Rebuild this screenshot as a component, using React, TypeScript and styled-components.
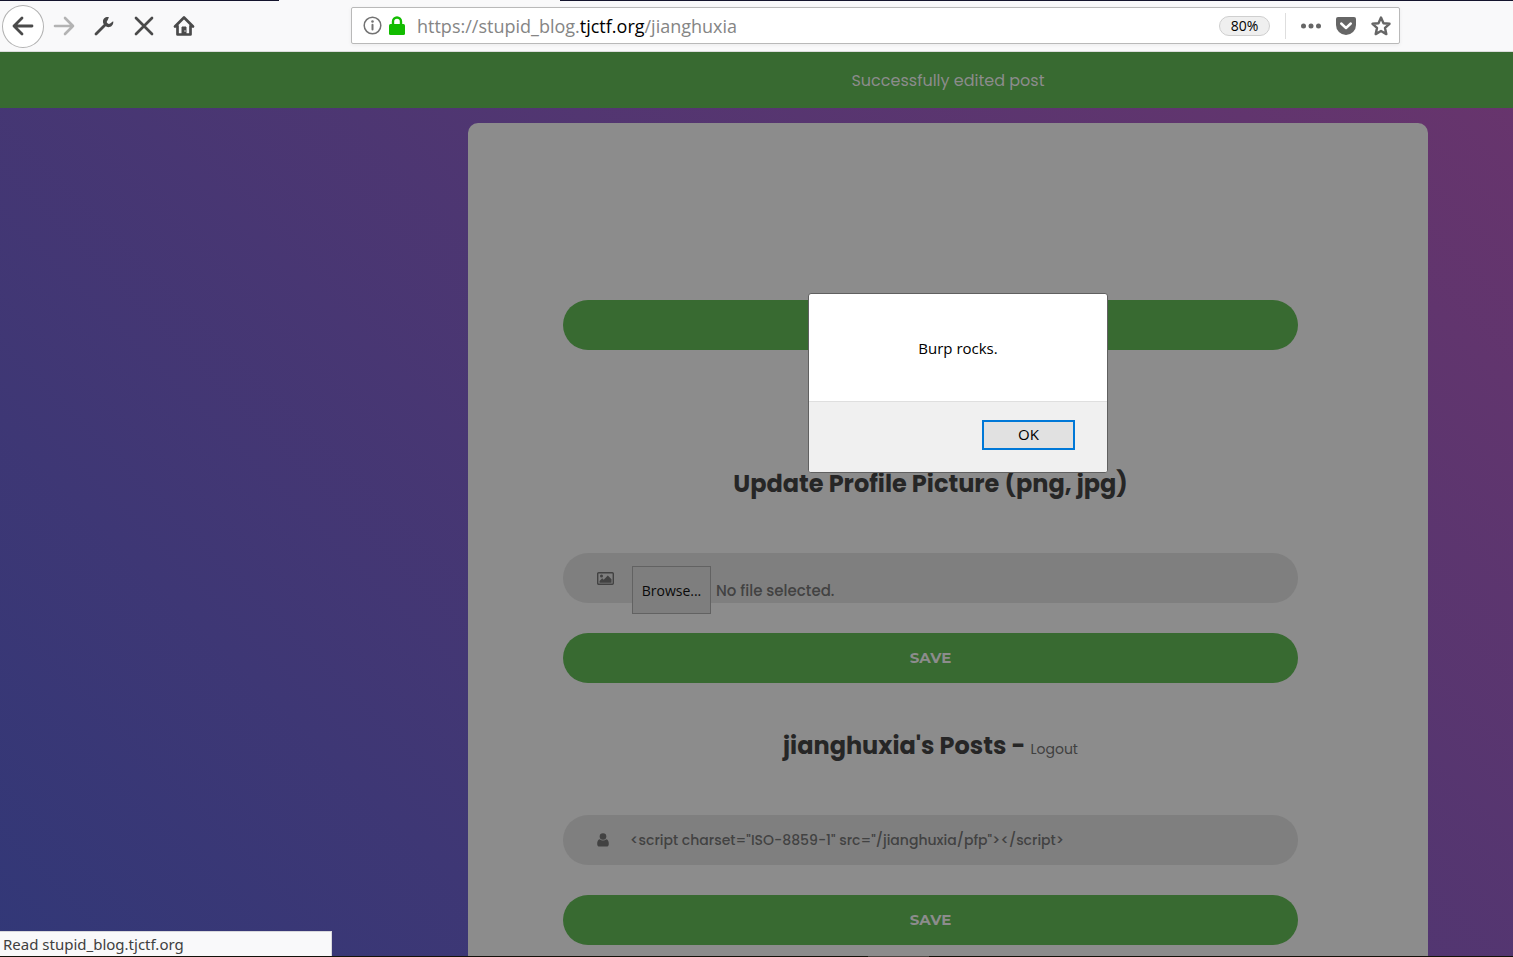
import React from "react";
import styled, { createGlobalStyle } from "styled-components";

const UI = `"Segoe UI", "Open Sans", "Noto Sans", sans-serif`;
const SITE = `Poppins, Inter, "Open Sans", sans-serif`;
const green = "#386a31";
const grey = "#8c8c8c";

const Global = createGlobalStyle`
  * { box-sizing: border-box; }
  body { margin: 0; overflow: hidden; background: #f9f9fa; }
  button, input { font: inherit; }
`;

const Browser = styled.div`
  display: flex;
  flex-direction: column;
  height: 100vh;
  overflow: hidden;
  font-family: ${UI};
`;

const TabEdge = styled.div`
  display: flex;
  justify-content: space-between;
  height: 1px;
  flex: none;
`;
const Edge = styled.div<{ $w: string }>`
  width: ${(p) => p.$w};
  background: #14142d;
`;
const BottomEdge = styled.div`
  height: 1px;
  flex: none;
  padding-left: 868px;
  background: #14120a;
`;
const BottomMark = styled.div`
  width: 61px;
  height: 1px;
  background: #4a4540;
`;

const Toolbar = styled.header`
  display: flex;
  align-items: center;
  flex: none;
  height: 51px;
  padding-left: 2px;
  background: #f9f9fa;
  border-bottom: 1px solid #dcdcdc;
`;

const Nav = styled.nav`
  display: flex;
  align-items: center;
  width: 349px;
`;

const NavButton = styled.button<{ $round?: boolean; $dim?: boolean }>`
  display: grid;
  place-items: center;
  width: ${(p) => (p.$round ? 42 : 40)}px;
  height: ${(p) => (p.$round ? 43 : 40)}px;
  padding: 0;
  border: ${(p) => (p.$round ? "1px solid #b2b2b2" : "0")};
  border-radius: 50%;
  background: ${(p) => (p.$round ? "#fff" : "none")};
  color: ${(p) => (p.$dim ? "#b3b3b3" : "#4a4a4a")};
`;

const UrlBar = styled.div`
  display: flex;
  align-items: center;
  flex: 1;
  max-width: 1049px;
  height: 37px;
  margin-bottom: 1px;
  padding: 0 8px 0 11px;
  background: #fff;
  border: 1px solid #b9b9b9;
  border-radius: 2px;
  box-shadow: 0 1px 4px rgba(0, 0, 0, 0.06);
`;
const LockIcon = styled.svg`
  margin-left: 7px;
`;
const Url = styled.div`
  flex: 1;
  margin-left: 12px;
  font-size: 18px;
  line-height: 24px;
  color: #858585;
  b { font-weight: 400; color: #000; }
`;
const Zoom = styled.button`
  width: 51px;
  height: 20px;
  padding: 0;
  border: 1px solid #cfcfcf;
  border-radius: 10px;
  background: #efefef;
  font-size: 14px;
  line-height: 18px;
  color: #000;
`;
const Divider = styled.span`
  width: 1px;
  height: 26px;
  margin: 0 15px;
  background: #dedede;
`;
const Actions = styled.div`
  display: flex;
  gap: 15px;
`;
const IconButton = styled.button`
  display: grid;
  padding: 0;
  border: 0;
  background: none;
  color: #666;
`;

const Viewport = styled.main`
  flex: 1;
  min-height: 0;
  overflow: hidden;
`;
const Site = styled.div`
  min-width: 1896px;
  font-family: ${SITE};
`;
const Notice = styled.div`
  height: 56px;
  padding-top: 17px;
  background: ${green};
  color: ${grey};
  font-size: 16px;
  line-height: 24px;
  text-align: center;
`;
const Backdrop = styled.div`
  display: flex;
  justify-content: center;
  padding: 15px 0;
  background: linear-gradient(-135deg, #70346b, #2f3878);
`;
const Card = styled.section`
  width: 960px;
  padding: 177px 130px 120px 95px;
  border-radius: 10px;
  background: ${grey};
`;
const Title = styled.h2<{ $first?: boolean }>`
  margin: ${(p) => (p.$first ? "115px" : "44px")} 0 50px;
  font-size: 24px;
  font-weight: 700;
  line-height: 38px;
  text-align: center;
  color: #262626;
`;
const Logout = styled.a`
  font-size: 14px;
  font-weight: 400;
  line-height: 20px;
  color: #404040;
  text-decoration: none;
`;
const Field = styled.div`
  display: flex;
  align-items: center;
  height: 50px;
  margin-bottom: 30px;
  padding: 0 34px;
  border-radius: 25px;
  background: #7f7f7f;
  color: #424242;
`;
const TextBox = styled.input`
  flex: 1;
  margin-left: 21px;
  padding: 0;
  border: 0;
  outline: 0;
  background: none;
  color: #424242;
  font-size: 14px;
  font-weight: 500;
  line-height: 24px;
`;
const FilePicker = styled.div`
  display: flex;
  align-items: center;
  align-self: flex-start;
  gap: 5px;
  margin: 13px 0 0 18px;
  font-size: 15px;
  font-weight: 500;
`;
const Browse = styled.label`
  width: 79px;
  height: 48px;
  border: 1px solid #626262;
  background: #7e7e7e;
  color: #0a0a0a;
  font-family: ${UI};
  font-size: 14px;
  font-weight: 400;
  line-height: 48px;
  text-align: center;
`;
const HiddenFile = styled.input`
  display: none;
`;
const Save = styled.button`
  display: block;
  width: 100%;
  height: 50px;
  padding: 0 0 2px;
  border: 0;
  border-radius: 25px;
  background: ${green};
  color: ${grey};
  font-family: Montserrat, Inter, sans-serif;
  font-size: 15px;
  font-weight: 700;
`;

const Dialog = styled.div`
  position: absolute;
  top: 293px;
  left: 808px;
  width: 300px;
  border: 1px solid #606060;
  border-radius: 3px;
  overflow: hidden;
  background: #fff;
  font-size: 15px;
  color: #000;
`;
const Message = styled.p`
  margin: 0;
  height: 107px;
  line-height: 108px;
  text-align: center;
`;
const DialogFooter = styled.div`
  display: flex;
  justify-content: flex-end;
  height: 71px;
  padding: 18px 32px;
  border-top: 1px solid #dfdfdf;
  background: #f0f0f0;
`;
const Ok = styled.button`
  width: 93px;
  height: 30px;
  padding: 0 0 2px;
  border: 2px solid #0078d7;
  background: #e1e1e1;
  color: #000;
`;
const Status = styled.div`
  position: absolute;
  left: 0;
  bottom: 1px;
  width: 332px;
  height: 25px;
  padding-left: 3px;
  border-top: 1px solid #d8d8dc;
  border-right: 1px solid #d8d8dc;
  background: #f9f9fa;
  color: #404040;
  font-family: "Segoe UI", "Noto Sans", sans-serif;
  font-size: 15px;
  line-height: 24px;
`;

const line = {
  fill: "none",
  stroke: "currentColor",
  strokeLinecap: "round" as const,
  strokeLinejoin: "round" as const,
};

export default function App() {
  return (
    <Browser>
      <Global />
      <TabEdge>
        <Edge $w="279px" />
        <Edge $w="63%" />
      </TabEdge>
      <Toolbar>
        <Nav>
          <NavButton $round aria-label="Back">
            <svg width="22" height="20" viewBox="0 0 22 20" {...line} strokeWidth="2.8">
              <path d="M20 10H2M10 2L2 10l8 8" />
            </svg>
          </NavButton>
          <NavButton $dim aria-label="Forward">
            <svg width="22" height="20" viewBox="0 0 22 20" {...line} strokeWidth="2.6">
              <path d="M2 10h18M12 2l8 8-8 8" />
            </svg>
          </NavButton>
          <NavButton aria-label="Developer tools">
            <svg width="20" height="20" viewBox="0 0 20 20">
              <path d="M2 18L11 9" {...line} strokeWidth="2.8" />
              <path
                fill="currentColor"
                d="M14.9 1.2C11.7.5 8.8 2.6 9 5.800c0 .8.1 1.200.3 1.700l3.300 3.300c3.200 1.200 6.700-1 6.700-4.600 0-.4 0-.7-.2-1l-3 2.300c-1 .7-2.300.4-2.900-.4-.6-.9-.5-2 .3-2.700z"
              />
            </svg>
          </NavButton>
          <NavButton aria-label="Stop">
            <svg width="20" height="20" viewBox="0 0 20 20" {...line} strokeWidth="2.7">
              <path d="M2 2l16 16M18 2L2 18" />
            </svg>
          </NavButton>
          <NavButton aria-label="Home">
            <svg width="22" height="22" viewBox="0 0 22 22" {...line} strokeWidth="2.7">
              <path d="M2 11.500L11 2.500l9 9M4.500 11v8.500h13V11" />
              <path d="M9 19v-7h4v7z" fill="currentColor" strokeWidth="1" />
              <circle cx="12" cy="16" r=".7" fill="#f9f9fa" stroke="none" />
            </svg>
          </NavButton>
        </Nav>
        <UrlBar>
          <svg width="19" height="19" viewBox="0 0 19 19" {...line} stroke="#737373">
            <circle cx="9.500" cy="9.500" r="8.300" strokeWidth="1.500" />
            <path d="M9.500 8.800v4.700" strokeWidth="2" />
            <circle cx="9.500" cy="5.500" r="1.300" fill="#737373" stroke="none" />
          </svg>
          <LockIcon width="16" height="19" viewBox="0 0 16 19">
            <path d="M4 9V5.500a4 4 0 0 1 8 0V9" fill="none" stroke="#12bc00" strokeWidth="2.400" />
            <rect y="8" width="16" height="11" rx="1.500" fill="#12bc00" />
          </LockIcon>
          <Url>
            https://stupid_blog.<b>tjctf.org</b>/jianghuxia
          </Url>
          <Zoom>80%</Zoom>
          <Divider />
          <Actions>
            <IconButton aria-label="Page actions">
              <svg width="20" height="20" viewBox="0 0 20 20" fill="currentColor">
                <circle cx="2.500" cy="10" r="2.500" />
                <circle cx="10" cy="10" r="2.500" />
                <circle cx="17.500" cy="10" r="2.500" />
              </svg>
            </IconButton>
            <IconButton aria-label="Save to Pocket">
              <svg width="20" height="20" viewBox="0 0 20 20">
                <path d="M2 1h16a2 2 0 0 1 2 2v6a10 10 0 0 1-20 0V3a2 2 0 0 1 2-2z" fill="currentColor" />
                <path d="M5.200 7.500L10 12l4.800-4.500" {...line} stroke="#fff" strokeWidth="2.400" />
              </svg>
            </IconButton>
            <IconButton aria-label="Bookmark">
              <svg width="20" height="20" viewBox="0 0 20 20" {...line} strokeWidth="2.400">
                <path d="M10 1.500l2.500 5.700 6 .6-4.500 4.100 1.300 6.200L10 15l-5.300 3.100L6 11.900 1.500 7.800l6-.6z" />
              </svg>
            </IconButton>
          </Actions>
        </UrlBar>
      </Toolbar>
      <Viewport>
        <Site>
          <Notice>Successfully edited post</Notice>
          <Backdrop>
            <Card>
              <Save aria-label="Save post" />
              <Title $first>Update Profile Picture (png, jpg)</Title>
              <Field>
                <svg width="17" height="13" viewBox="0 0 17 13">
                  <rect x=".7" y=".7" width="15.600" height="11.600" rx="1" fill="none" stroke="currentColor" strokeWidth="1.400" />
                  <circle cx="4.500" cy="4" r="1.500" fill="currentColor" />
                  <path d="M2.500 10.800V9l2.700-2.700 1.500 1.400L10.800 3.600l3.700 3.700v3.500z" fill="currentColor" />
                </svg>
                <FilePicker>
                  <Browse htmlFor="picture">Browse...</Browse>
                  <HiddenFile id="picture" type="file" />
                  <span>No file selected.</span>
                </FilePicker>
              </Field>
              <Save>SAVE</Save>
              <Title>
                jianghuxia's Posts - <Logout href="#logout">Logout</Logout>
              </Title>
              <Field>
                <svg width="12" height="14" viewBox="0 0 12 14" fill="currentColor">
                  <circle cx="6" cy="3.500" r="3.300" />
                  <path d="M2.700 6.200C.8 6.600.2 8.600.2 11c0 1.700.9 2.600 2.200 2.600h7.200c1.300 0 2.200-.9 2.200-2.600 0-2.400-.6-4.400-2.500-4.800a4.600 4.600 0 0 1-6.600 0z" />
                </svg>
                <TextBox aria-label="Post" defaultValue={'<script charset="ISO-8859-1" src="/jianghuxia/pfp"></script>'} />
              </Field>
              <Save>SAVE</Save>
            </Card>
          </Backdrop>
        </Site>
      </Viewport>
      <BottomEdge>
        <BottomMark />
      </BottomEdge>
      <Dialog role="alertdialog" aria-label="Burp rocks.">
        <Message>Burp rocks.</Message>
        <DialogFooter>
          <Ok>OK</Ok>
        </DialogFooter>
      </Dialog>
      <Status>Read stupid_blog.tjctf.org</Status>
    </Browser>
  );
}
